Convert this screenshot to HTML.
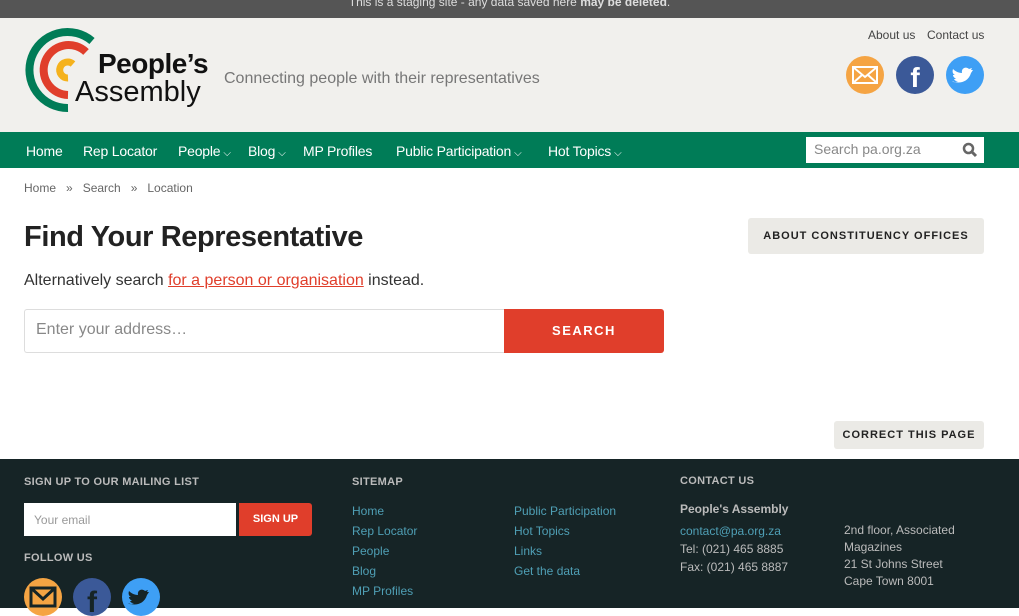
<!DOCTYPE html>
<html><head><meta charset="utf-8"><style>
*{box-sizing:border-box;margin:0;padding:0}
body{width:1019px;height:608px;overflow:hidden;position:relative;font-family:"Liberation Sans",sans-serif;background:#fff}
.a{position:absolute;white-space:nowrap}
#top{left:0;top:0;width:1019px;height:18px;background:#555;color:#ddd;font-size:12px;text-align:center;line-height:4px}
#hdr{left:0;top:18px;width:1019px;height:114px;background:#f1f0ed}
#nav{left:0;top:132px;width:1019px;height:36px;background:#007c57}
.n{color:#fff;font-size:14px;top:143px;letter-spacing:-.2px}
.car{font-size:10px;margin-left:3px}
#foot{left:0;top:459px;width:1019px;height:149px;background:#162426}
.fh{color:#bbb;font-size:11px;font-weight:bold;letter-spacing:.3px}
.fl{color:#4f9fb5;font-size:12px}
.ft{color:#bbb;font-size:12px}
.btn{background:#ebeae6;color:#222;font-size:11px;font-weight:bold;letter-spacing:1px;text-align:center;border-radius:3px}
</style></head><body>
<div class="a" id="top">This is a staging site - any data saved here <b>may be deleted</b>.</div>
<div class="a" id="hdr"></div>
<svg class="a" style="left:0;top:18px" width="110" height="110" viewBox="0 18 110 110">
<path d="M92 41 A38 38 0 1 0 68 108" fill="none" stroke="#007c57" stroke-width="8"/>
<path d="M86 52 A25 25 0 1 0 68 95" fill="none" stroke="#e03e2b" stroke-width="8"/>
<path d="M73 64 A8 8 0 1 0 68 78" fill="none" stroke="#f5b21d" stroke-width="7"/>
</svg>
<div class="a" style="left:98px;top:48px;font-size:28px;font-weight:bold;color:#111;letter-spacing:-.5px">People’s</div>
<div class="a" style="left:75px;top:76px;font-size:29px;color:#111">Assembly</div>
<div class="a" style="left:224px;top:70px;font-size:16px;color:#777">Connecting people with their representatives</div>
<div class="a" style="left:868px;top:28px;font-size:12px;color:#444">About us</div>
<div class="a" style="left:927px;top:28px;font-size:12px;color:#444">Contact us</div>
<svg class="a" style="left:846px;top:56px" width="140" height="38">
<circle cx="19" cy="19" r="19" fill="#f5a443"/><rect x="7" y="11" width="24" height="16" fill="none" stroke="#fff" stroke-width="2"/><path d="M7 11 L19 21 L31 11 M7 27 L16 19 M31 27 L22 19" stroke="#fff" stroke-width="2" fill="none"/>
<circle cx="69" cy="19" r="19" fill="#3b5998"/><text x="69" y="31" fill="#fff" font-size="28" font-weight="bold" text-anchor="middle" font-family="Liberation Sans">f</text>
<circle cx="119" cy="19" r="19" fill="#3e9ff5"/><path d="M106 25 c6 3 16 2 19 -8 l2 -3 -2 0 1 -2 -3 1 c-3 -3 -8 -1 -7 4 c-4 0 -7 -2 -9 -4 c-1 3 0 5 2 6 l-2 0 c0 2 2 3 3 4 l-2 0 c1 2 2 2 4 2 c-2 1 -4 2 -6 0z" fill="#fff"/>
</svg>
<div class="a" id="nav"></div>
<div class="a n" style="left:26px">Home</div>
<div class="a n" style="left:83px">Rep Locator</div>
<div class="a n" style="left:178px">People<span class="car">⌵</span></div>
<div class="a n" style="left:248px">Blog<span class="car">⌵</span></div>
<div class="a n" style="left:303px">MP Profiles</div>
<div class="a n" style="left:396px">Public Participation<span class="car">⌵</span></div>
<div class="a n" style="left:548px">Hot Topics<span class="car">⌵</span></div>
<div class="a" style="left:806px;top:137px;width:178px;height:26px;background:#fff"></div>
<div class="a" style="left:814px;top:141px;font-size:14px;color:#888">Search pa.org.za</div>
<svg class="a" style="left:962px;top:142px" width="16" height="16"><circle cx="6.5" cy="6.5" r="4.5" fill="none" stroke="#666" stroke-width="2.5"/><path d="M10 10 L14 14" stroke="#666" stroke-width="3"/></svg>
<div class="a" style="left:24px;top:181px;font-size:12px;color:#666">Home &nbsp; » &nbsp; Search &nbsp; » &nbsp; Location</div>
<div class="a" style="left:24px;top:221px;font-size:29px;font-weight:bold;color:#222;letter-spacing:-.4px">Find Your Representative</div>
<div class="a btn" style="left:748px;top:218px;width:236px;height:36px;line-height:36px">ABOUT CONSTITUENCY OFFICES</div>
<div class="a" style="left:24px;top:272px;font-size:16px;color:#333">Alternatively search <span style="color:#e03e2b;text-decoration:underline">for a person or organisation</span> instead.</div>
<div class="a" style="left:24px;top:309px;width:481px;height:44px;border:1px solid #ddd;border-right:none;border-radius:3px 0 0 3px"></div>
<div class="a" style="left:36px;top:321px;font-size:16px;color:#888">Enter your address…</div>
<div class="a" style="left:504px;top:309px;width:160px;height:44px;background:#e03e2b;border-radius:0 3px 3px 0;color:#fff;font-size:13px;font-weight:bold;letter-spacing:1.5px;text-align:center;line-height:44px">SEARCH</div>
<div class="a btn" style="left:834px;top:421px;width:150px;height:28px;line-height:28px">CORRECT THIS PAGE</div>
<div class="a" id="foot"></div>
<div class="a fh" style="left:24px;top:476px">SIGN UP TO OUR MAILING LIST</div>
<div class="a" style="left:24px;top:503px;width:212px;height:33px;background:#fff"></div>
<div class="a" style="left:34px;top:513px;font-size:12px;color:#999">Your email</div>
<div class="a" style="left:239px;top:503px;width:73px;height:33px;background:#e03e2b;border-radius:0 3px 3px 0;color:#fff;font-size:11px;font-weight:bold;text-align:center;line-height:33px">SIGN UP</div>
<div class="a fh" style="left:24px;top:552px">FOLLOW US</div>
<svg class="a" style="left:24px;top:578px" width="140" height="38">
<circle cx="19" cy="19" r="19" fill="#f5a443"/><rect x="7" y="10" width="24" height="18" fill="none" stroke="#162426" stroke-width="3"/><path d="M7 10 L19 21 L31 10" stroke="#162426" stroke-width="3" fill="none"/>
<circle cx="68" cy="19" r="19" fill="#3b5998"/><text x="68" y="34" fill="#162426" font-size="30" font-weight="bold" text-anchor="middle" font-family="Liberation Sans">f</text>
<circle cx="117" cy="19" r="19" fill="#3e9ff5"/><path d="M104 25 c6 3 16 2 19 -8 l2 -3 -2 0 1 -2 -3 1 c-3 -3 -8 -1 -7 4 c-4 0 -7 -2 -9 -4 c-1 3 0 5 2 6 l-2 0 c0 2 2 3 3 4 l-2 0 c1 2 2 2 4 2 c-2 1 -4 2 -6 0z" fill="#162426"/>
</svg>
<div class="a fh" style="left:352px;top:476px">SITEMAP</div>
<div class="a fl" style="left:352px;top:501px;line-height:20px">Home<br>Rep Locator<br>People<br>Blog<br>MP Profiles</div>
<div class="a fl" style="left:514px;top:501px;line-height:20px">Public Participation<br>Hot Topics<br>Links<br>Get the data</div>
<div class="a fh" style="left:680px;top:475px">CONTACT US</div>
<div class="a ft" style="left:680px;top:502px;font-weight:bold">People's Assembly</div>
<div class="a ft" style="left:680px;top:522px;line-height:18px"><span style="color:#4f9fb5">contact@pa.org.za</span><br>Tel: (021) 465 8885<br>Fax: (021) 465 8887</div>
<div class="a ft" style="left:844px;top:522px;line-height:17px">2nd floor, Associated<br>Magazines<br>21 St Johns Street<br>Cape Town 8001</div>
</body></html>
